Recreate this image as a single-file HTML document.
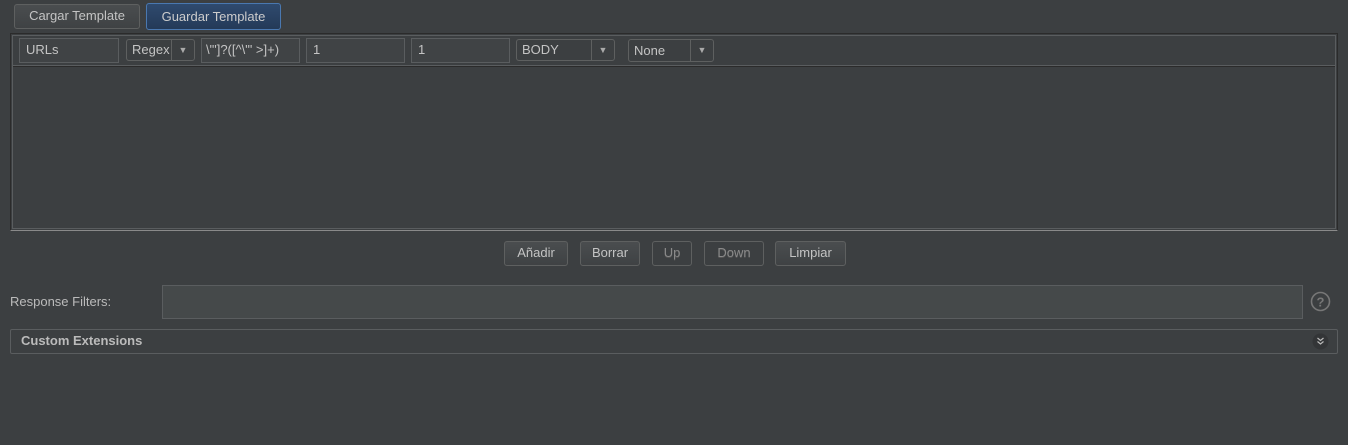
<!DOCTYPE html>
<html><head><style>
body{margin:0;width:1348px;height:445px;background:#3c3f41;font-family:"Liberation Sans",sans-serif;font-size:13px;color:#bbbbbb;position:relative;overflow:hidden}
.a{position:absolute;box-sizing:border-box}
.btn{border:1px solid #5e6060;border-radius:3px;background:linear-gradient(#4a4d4f,#3f4244);text-align:center;line-height:22px;color:#c4c4c4}
.fld{border:1px solid #5a5d5f;background:#404345;padding-left:6px;line-height:22px;color:#c4c4c4}
.cmb{border:1px solid #5e6060;border-radius:3px;background:#3c3f41;padding-left:5px;line-height:20px;color:#c4c4c4}
.cmb i{position:absolute;right:0;top:0;bottom:0;width:22px;border-left:1px solid #5e6060;font-style:normal;font-size:9px;text-align:center;line-height:20px;color:#aaa}
</style></head><body>
<div class="a btn" style="left:14px;top:4px;width:126px;height:25px">Cargar Template</div>
<div class="a btn" style="left:146px;top:3px;width:135px;height:27px;border:1px solid #4a78b0;background:linear-gradient(#2f4a6e,#243a58);line-height:25px;color:#ccc">Guardar Template</div>

<div class="a" style="left:10px;top:33px;width:1328px;height:198px;border:1px solid #2b2b2b;border-bottom:1px solid #8a8a8a"></div>
<div class="a" style="left:12px;top:35px;width:1324px;height:194px;border:1px solid #5a5d5f"></div>
<div class="a" style="left:13px;top:65px;width:1322px;height:2px;border-top:1px solid #5a5d5f;border-bottom:1px solid #2b2b2b"></div>

<div class="a fld" style="left:19px;top:38px;width:100px;height:25px">URLs</div>
<div class="a cmb" style="left:126px;top:39px;width:69px;height:22px">Regex<i>▼</i></div>
<div class="a fld" style="left:201px;top:38px;width:99px;height:25px;padding-left:4px">\"']?([^\"' &gt;]+)</div>
<div class="a fld" style="left:306px;top:38px;width:99px;height:25px">1</div>
<div class="a fld" style="left:411px;top:38px;width:99px;height:25px">1</div>
<div class="a cmb" style="left:516px;top:39px;width:99px;height:22px">BODY<i>▼</i></div>
<div class="a cmb" style="left:628px;top:39px;width:86px;height:23px;line-height:21px">None<i style="line-height:21px">▼</i></div>

<div class="a btn" style="left:504px;top:241px;width:64px;height:25px">Añadir</div>
<div class="a btn" style="left:580px;top:241px;width:60px;height:25px">Borrar</div>
<div class="a btn" style="left:652px;top:241px;width:40px;height:25px;background:#3c3f41;color:#8a8a8a;text-shadow:0 1px 0 #555">Up</div>
<div class="a btn" style="left:704px;top:241px;width:60px;height:25px;background:#3c3f41;color:#8a8a8a;text-shadow:0 1px 0 #555">Down</div>
<div class="a btn" style="left:775px;top:241px;width:71px;height:25px">Limpiar</div>

<div class="a" style="left:10px;top:294px;font-size:13px">Response Filters:</div>
<div class="a" style="left:162px;top:285px;width:1141px;height:34px;border:1px solid #5a5d5f;background:#45494a"></div>
<svg class="a" style="left:1310px;top:291px" width="21" height="21"><circle cx="10.5" cy="10.5" r="9" fill="none" stroke="#777" stroke-width="1.6"/><text x="10.5" y="15.5" text-anchor="middle" font-family="Liberation Sans" font-weight="bold" font-size="13" fill="#777">?</text></svg>

<div class="a" style="left:10px;top:329px;width:1328px;height:25px;border:1px solid #5a5d5f;border-radius:2px"></div>
<div class="a" style="left:21px;top:333px;font-weight:bold;font-size:13px;color:#bbb">Custom Extensions</div>
<svg class="a" style="left:1312px;top:333px" width="17" height="17"><circle cx="8.5" cy="8.5" r="8" fill="#333537"/><path d="M5.5 5l3 2.5 3-2.5M5.5 8.5l3 2.5 3-2.5" fill="none" stroke="#bbb" stroke-width="1.2"/></svg>
</body></html>
